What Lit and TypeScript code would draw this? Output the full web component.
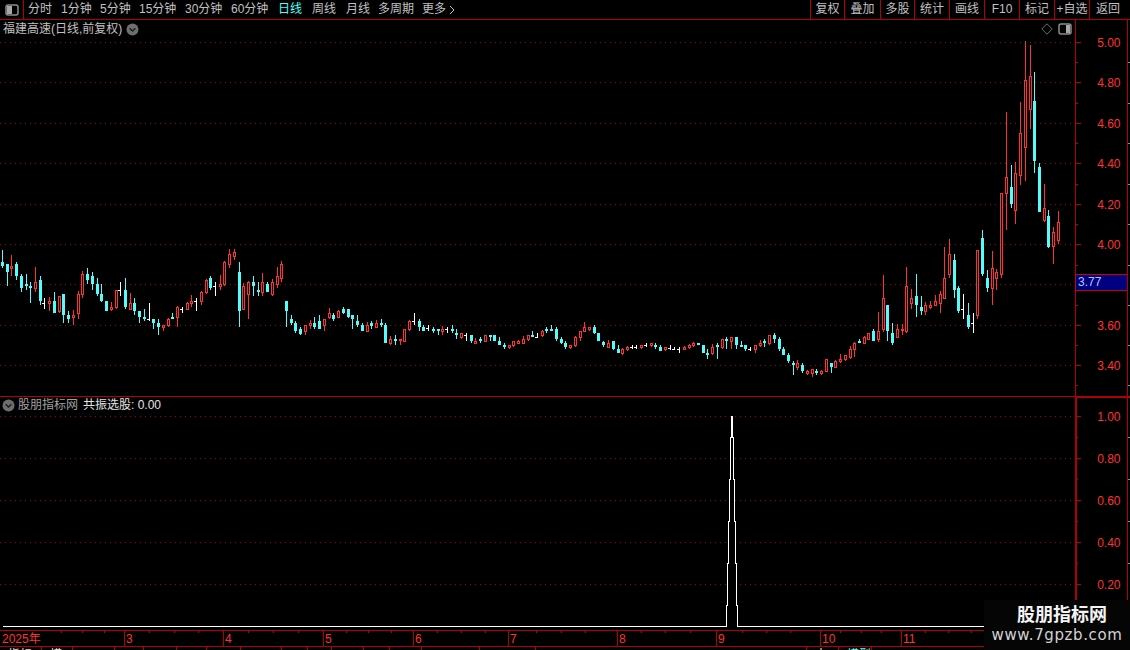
import { LitElement, css, html, svg } from "lit";
import { customElement } from "lit/decorators.js";

type Kind = "c" | "r" | "w";
type Row = [number, number, number, number, number, Kind];

const RED = "#ff3232";
const CYAN = "#54fcfc";
const FRAME = "#b00000";

// candles read off the chart, [x, wick top, body top, body bottom, wick bottom, kind],
// in 3x units from the origin of each stretch
const STRETCHES: { ox: number; oy: number; rows: Row[] }[] = [
  {
    ox: 0,
    oy: 240,
    rows: [
      [7,30,66,78,84,"c"],[22,72,72,96,138,"c"],[34,45,78,87,108,"r"],[49,66,72,108,120,"c"],[64,102,108,144,156,"c"],
      [79,102,132,138,150,"c"],[91,126,138,144,189,"c"],[106,81,126,147,156,"r"],[121,108,120,183,195,"c"],[133,174,189,189,207,"w"],
      [148,171,183,192,213,"r"],[163,156,183,219,219,"c"],[178,168,168,216,219,"r"],[190,162,162,225,249,"c"],[205,213,225,237,249,"c"],
      [220,210,225,234,255,"r"],[235,153,162,222,237,"r"],[247,93,102,165,174,"r"],[262,84,102,120,132,"c"],[277,96,108,132,150,"c"],
      [292,114,132,162,168,"c"],[304,132,162,183,186,"c"],[319,183,183,213,213,"c"],[334,186,201,210,213,"r"],[349,150,150,204,207,"r"],
      [361,126,150,150,168,"w"],[376,114,150,201,207,"c"],[391,159,189,210,210,"r"],[403,174,189,213,225,"c"],[418,213,213,231,249,"c"],
      [433,207,231,237,243,"c"],[448,189,238,238,243,"w"],[460,237,237,249,267,"c"],[475,237,249,261,285,"c"],[490,255,255,264,273,"r"],
      [505,234,237,258,261,"r"],[517,219,231,237,237,"c"],[532,198,201,234,261,"r"],[547,201,207,207,219,"w"],[562,186,189,210,210,"r"],
      [574,165,183,192,201,"r"],[589,174,183,183,213,"w"],[604,153,156,186,195,"r"],[619,117,120,159,162,"r"],[631,108,114,144,150,"c"],
      [646,126,138,138,168,"w"],[661,105,132,141,150,"r"],[673,63,66,135,138,"r"],[688,27,42,75,84,"r"],[703,27,36,51,60,"r"],
      [718,66,96,213,261,"c"],[730,129,138,210,210,"r"],[745,123,126,165,237,"r"],[760,108,126,138,168,"c"],[775,126,150,156,168,"c"],
      [787,99,126,159,168,"r"],[802,126,132,156,156,"c"],[817,117,126,165,168,"r"],[832,81,108,135,144,"r"],[844,63,72,117,126,"r"],
      [859,183,183,213,261,"c"],[874,225,237,249,255,"c"],[886,243,249,273,279,"c"],
    ],
  },
  {
    ox: 300,
    oy: 300,
    rows: [
      [1,82,87,102,105,"c"],[16,75,75,96,105,"r"],[31,60,69,78,87,"r"],[43,51,69,81,87,"c"],[58,45,63,87,87,"c"],
      [73,57,57,78,93,"r"],[88,24,39,54,57,"r"],[100,39,45,57,63,"c"],[115,30,33,54,54,"r"],[130,21,27,39,42,"c"],
      [145,27,27,51,54,"c"],[157,45,45,57,87,"c"],[172,45,63,75,81,"c"],[187,69,75,93,93,"c"],[202,66,75,96,96,"r"],
      [214,63,69,78,87,"c"],[229,60,69,84,84,"r"],[244,57,69,75,81,"c"],[256,69,75,129,129,"c"],[271,108,117,132,135,"r"],
      [286,105,117,123,135,"c"],[301,117,117,123,135,"r"],[313,87,87,126,126,"r"],[328,60,63,90,93,"r"],[343,39,63,63,75,"w"],
      [358,57,63,81,93,"c"],[370,75,81,93,93,"c"],[385,75,84,84,93,"w"],[400,81,87,93,99,"c"],[415,87,87,93,105,"c"],
      [427,78,87,96,105,"r"],[442,81,87,87,99,"w"],[457,75,87,93,99,"c"],[469,87,99,102,117,"c"],[484,99,99,114,117,"r"],
      [499,99,105,105,123,"w"],[514,105,105,123,129,"c"],[526,114,123,132,132,"r"],[541,111,117,123,129,"c"],[556,105,105,126,126,"r"],
      [571,105,105,111,123,"c"],[583,105,105,123,123,"c"],[598,111,123,135,135,"c"],[613,129,135,141,147,"c"],[628,135,135,144,147,"r"],
      [640,123,123,138,141,"r"],[655,120,123,132,132,"r"],[670,108,117,132,132,"r"],[685,105,105,120,123,"r"],[697,93,105,111,111,"c"],
      [712,99,111,111,114,"w"],[727,90,93,108,111,"r"],[739,81,87,93,99,"c"],[754,75,87,93,93,"c"],[769,81,87,117,123,"c"],
      [784,111,117,129,132,"c"],[796,123,129,141,147,"c"],[811,135,135,144,147,"r"],[826,108,111,138,141,"r"],[841,93,93,114,123,"r"],
      [853,66,81,96,96,"r"],[868,81,81,90,93,"r"],[883,75,81,99,102,"c"],[895,99,99,123,123,"c"],
    ],
  },
  {
    ox: 600,
    oy: 310,
    rows: [
      [10,93,96,105,111,"c"],[25,90,99,114,114,"r"],[40,93,93,117,120,"c"],[55,105,117,129,129,"c"],[67,114,117,132,135,"r"],
      [82,108,111,120,123,"r"],[97,105,111,111,117,"w"],[109,105,111,111,117,"w"],[124,105,105,114,117,"r"],[139,99,105,105,111,"w"],
      [154,99,99,108,111,"r"],[166,99,105,111,117,"c"],[181,105,111,123,123,"c"],[196,111,111,120,123,"r"],[211,105,114,114,120,"w"],
      [223,111,117,117,120,"w"],[238,111,117,117,129,"w"],[253,108,111,120,120,"r"],[268,102,105,114,117,"r"],[280,96,99,108,111,"r"],
      [295,99,99,105,105,"c"],[310,105,105,129,129,"c"],[322,117,129,135,147,"c"],[337,102,111,132,135,"r"],[352,99,105,111,147,"c"],
      [367,87,87,114,117,"r"],[379,81,87,93,117,"c"],[394,81,81,96,117,"r"],[409,81,81,105,117,"c"],[424,93,105,111,111,"c"],
      [436,105,105,117,123,"c"],[451,111,117,117,123,"w"],[466,105,105,120,129,"r"],[481,90,99,108,111,"r"],[493,87,93,99,111,"c"],
      [508,75,75,102,105,"r"],[523,69,75,87,99,"c"],[538,81,87,117,123,"c"],[550,111,117,135,135,"c"],[565,129,135,153,159,"c"],
      [580,153,159,165,195,"c"],[592,150,159,174,180,"r"],[607,159,165,183,189,"c"],[622,180,183,192,195,"r"],[637,177,177,192,201,"r"],
      [649,177,183,189,195,"c"],[664,180,183,192,195,"r"],[679,147,147,186,186,"r"],[694,159,159,171,189,"c"],[706,150,153,174,174,"r"],
      [721,132,147,156,159,"r"],[736,135,135,150,153,"r"],[751,108,117,144,147,"r"],[763,96,99,120,141,"r"],[778,87,93,99,99,"c"],
      [793,78,81,102,102,"r"],[805,69,69,90,90,"r"],[820,57,63,93,93,"c"],
    ],
  },
  {
    ox: 860,
    oy: 30,
    rows: [
      [55,846,903,930,936,"r"],[70,735,804,900,906,"r"],[82,825,825,903,933,"c"],[97,879,909,939,945,"c"],[112,882,897,924,924,"r"],
      [127,882,897,903,915,"r"],[139,711,768,906,909,"r"],[154,777,804,822,837,"r"],[169,732,798,825,861,"c"],[184,798,831,843,855,"c"],
      [196,816,825,846,855,"r"],[211,813,825,834,837,"r"],[226,795,813,828,828,"r"],[241,783,792,822,849,"r"],[253,651,744,807,807,"r"],
      [268,627,672,735,744,"r"],[283,672,690,780,804,"c"],[295,768,774,843,849,"c"],[310,792,837,837,867,"w"],[325,819,855,891,897,"c"],
      [340,849,879,879,909,"w"],[352,660,660,858,867,"r"],[367,600,624,732,738,"c"],[382,720,744,774,786,"c"],[397,663,714,777,825,"r"],
      [409,717,726,747,780,"r"],[424,489,489,735,744,"r"],[439,246,441,492,600,"r"],[454,405,471,522,534,"c"],[466,396,429,543,582,"r"],
      [481,216,309,438,465,"r"],[496,33,150,354,453,"r"],[511,45,138,240,297,"r"],[523,126,213,393,429,"c"],[538,399,411,546,546,"c"],
      [553,462,534,573,576,"r"],[565,540,558,651,654,"c"],[580,591,606,651,702,"r"],[595,543,576,633,642,"r"],
    ],
  },
];

const PRICE_AXIS = [
  { y: 42, label: "5.00" },
  { y: 82, label: "4.80" },
  { y: 123, label: "4.60" },
  { y: 163, label: "4.40" },
  { y: 204, label: "4.20" },
  { y: 244, label: "4.00" },
  { y: 325, label: "3.60" },
  { y: 365, label: "3.40" },
];
const PRICE_GRID = [42, 82, 123, 163, 204, 244, 284, 325, 365];
const PRICE_MINOR = [62, 103, 143, 184, 224, 265, 305, 345, 385];

const SIGNAL_AXIS = [
  { y: 416, label: "1.00" },
  { y: 458, label: "0.80" },
  { y: 500, label: "0.60" },
  { y: 542, label: "0.40" },
  { y: 584, label: "0.20" },
];
const SIGNAL_MINOR = [437, 479, 521, 563, 605];

// stepped outline of the single signal spike
const SPIKE = [
  [2, 626], [726, 626], [726, 605], [727, 605], [727, 563], [728, 563], [728, 521], [729, 521],
  [729, 479], [730, 479], [730, 437], [731, 437], [731, 416], [732, 416], [732, 437], [733, 437],
  [733, 479], [734, 479], [734, 521], [735, 521], [735, 563], [736, 563], [736, 605], [737, 605],
  [737, 626], [984, 626],
];

const MONTHS = [
  { x: 0, label: "2025年" },
  { x: 124, label: "3" },
  { x: 223, label: "4" },
  { x: 323, label: "5" },
  { x: 413, label: "6" },
  { x: 508, label: "7" },
  { x: 617, label: "8" },
  { x: 716, label: "9" },
  { x: 820, label: "10" },
  { x: 901, label: "11" },
];
const WEEK_TICKS = [
  61, 82, 104, 149, 174, 198, 248, 273, 298, 346, 368, 391, 437, 461, 485, 536, 561, 585,
  641, 665, 690, 742, 766, 790, 840, 861, 881, 925, 948, 971,
];

const TABS = [
  { label: "分时", w: 33 },
  { label: "1分钟", w: 39 },
  { label: "5分钟", w: 39 },
  { label: "15分钟", w: 46 },
  { label: "30分钟", w: 46 },
  { label: "60分钟", w: 47 },
  { label: "日线", w: 34, on: true },
  { label: "周线", w: 34 },
  { label: "月线", w: 32 },
  { label: "多周期", w: 44 },
];

const TOOLS = [
  { label: "复权", w: 34 },
  { label: "叠加", w: 36 },
  { label: "多股", w: 34 },
  { label: "统计", w: 35 },
  { label: "画线", w: 35 },
  { label: "F10", w: 35 },
  { label: "标记", w: 35 },
  { label: "+自选", w: 35 },
  { label: "返回", w: 41 },
];

// bottom strip, mostly cut off by the window edge
const STRIP = [
  { label: "指标", w: 42 }, { label: "模板", w: 31 }, { label: "", w: 42 }, { label: "", w: 29 },
  { label: "", w: 33 }, { label: "", w: 30 }, { label: "", w: 34 }, { label: "", w: 41 },
  { label: "", w: 26 }, { label: "", w: 24 }, { label: "", w: 32 }, { label: "", w: 26 },
  { label: "", w: 32 }, { label: "", w: 58 }, { label: "", w: 56 }, { label: "", w: 271 },
  { label: "大盘", w: 32 }, { label: "模型", w: 33, on: true },
];

const panelIcon = (fillLeft: boolean) => html`
  <svg class="icon" width="14" height="12" viewBox="0 0 14 12">
    <rect x="1" y="1" width="12" height="10" rx="2" fill="#000" stroke="#8c8c8c" stroke-width="1.5"></rect>
    ${fillLeft
      ? svg`<rect x="2" y="2" width="5" height="8" fill="#a8a8a8"></rect>`
      : svg`<rect x="8" y="2" width="4" height="8" fill="#a8a8a8"></rect>`}
  </svg>
`;

const chevronBadge = () => html`
  <svg class="badge" width="13" height="13" viewBox="0 0 13 13">
    <circle cx="6.5" cy="6.5" r="6" fill="#6e6e6e"></circle>
    <path d="M3.6 5.2 L6.5 8 L9.4 5.2" fill="none" stroke="#1c1c1c" stroke-width="1.5"></path>
  </svg>
`;

const candleMarks = () =>
  STRETCHES.flatMap(({ ox, oy, rows }) =>
    rows.map(([zx, top, bodyTop, bodyBot, bottom, kind]) => {
      const x = Math.floor(ox + zx / 3);
      const y0 = Math.round(oy + top / 3);
      const y1 = Math.round(oy + bottom / 3);
      const b0 = Math.round(oy + bodyTop / 3);
      const b1 = Math.round(oy + bodyBot / 3);
      const color = kind === "c" ? CYAN : kind === "r" ? RED : "#fff";
      const wick = svg`<rect x=${x} y=${y0} width="1" height=${Math.max(y1 - y0, 1)} fill=${color}></rect>`;
      if (kind === "w") {
        return svg`${wick}<rect x=${x - 2} y=${b0} width="2" height="1" fill="#fff"></rect>`;
      }
      if (kind === "c") {
        return svg`${wick}<rect x=${x - 1} y=${b0} width="3" height=${Math.max(b1 - b0, 2)} fill=${CYAN}></rect>`;
      }
      return svg`${wick}<rect x=${x - 0.5} y=${b0 + 0.5} width="2" height=${Math.max(b1 - b0 - 1, 1)} fill="#000" stroke=${RED}></rect>`;
    })
  );

const gridLines = (ys: number[]) =>
  ys.map((y) => svg`<line class="grid" x1="0" x2="1075" y1=${y + 0.5} y2=${y + 0.5}></line>`);

const axisMarks = (
  labels: { y: number; label: string }[],
  minor: number[],
  lineWidth: number,
  top: number,
  bottom: number
) => svg`
  <rect x="1075" y=${top} width=${lineWidth} height=${bottom - top} fill=${FRAME}></rect>
  <rect x="1127" y=${top} width="1" height=${bottom - top} fill=${FRAME}></rect>
  ${labels.map(
    (l) => svg`
      <rect x="1075" y=${l.y} width="6" height="1" fill=${FRAME}></rect>
      <text class="axis" x="1120.5" y=${l.y + 5} text-anchor="end">${l.label}</text>
    `
  )}
  ${minor.map((y) => svg`<rect x="1075" y=${y} width="3" height="1" fill=${FRAME}></rect>`)}
  ${minor.map((y) => svg`<rect x="1128" y=${y} width="2" height="1" fill="#8c8c8c"></rect>`)}
`;

@customElement("app-root")
export class AppRoot extends LitElement {
  static styles = css`
    :host {
      position: relative;
      display: flex;
      flex-direction: column;
      width: 1130px;
      height: 650px;
      overflow: hidden;
      background: #000;
      color: #c0c0c0;
      font: 12px "Liberation Sans", "Noto Sans CJK SC", sans-serif;
    }
    svg {
      display: block;
      flex: none;
    }
    .chart {
      shape-rendering: crispEdges;
    }
    .grid {
      stroke: #a00000;
      stroke-dasharray: 1 4;
    }
    .axis {
      fill: #ff3232;
      font-size: 12px;
      shape-rendering: auto;
    }
    .toolbar {
      display: flex;
      align-items: stretch;
      height: 19px;
      flex: none;
      border-bottom: 1px solid #b00000;
      line-height: 19px;
    }
    .toggle {
      display: flex;
      align-items: center;
      justify-content: center;
      width: 23px;
      border-right: 1px solid #b00000;
    }
    .tabs {
      display: flex;
      padding-left: 4px;
    }
    .tab {
      white-space: nowrap;
    }
    .tab.on {
      color: #54fcfc;
    }
    .more {
      display: flex;
      align-items: center;
      gap: 3px;
      width: 36px;
      white-space: nowrap;
    }
    .tools {
      display: flex;
      margin-left: auto;
    }
    .tool {
      box-sizing: border-box;
      border-left: 1px solid #b00000;
      text-align: center;
      white-space: nowrap;
    }
    .tool:last-child {
      padding-right: 4px;
    }
    .panel {
      position: relative;
      flex: none;
    }
    .price {
      height: 376px;
      border-bottom: 1px solid #b00000;
    }
    .signal {
      height: 233px;
    }
    .legend {
      position: absolute;
      top: 2px;
      left: 3px;
      display: flex;
      align-items: center;
      gap: 4px;
      line-height: 15px;
    }
    .signal .legend {
      top: 1px;
      left: 2px;
      gap: 3px;
    }
    .dim {
      color: #a0a0a0;
    }
    .value {
      margin-left: 2px;
      color: #e4e4e4;
    }
    .corner {
      position: absolute;
      top: 3px;
      left: 1041px;
      display: flex;
      align-items: center;
      gap: 5px;
    }
    .last-price {
      position: absolute;
      top: 254px;
      left: 1075px;
      box-sizing: border-box;
      width: 52px;
      height: 17px;
      padding-left: 2px;
      background: #000080;
      border-top: 1px solid #c80000;
      border-bottom: 1px solid #c80000;
      border-left: 1px solid #c80000;
      color: #aac8ff;
      line-height: 15px;
    }
    .dates {
      height: 16px;
      flex: none;
    }
    .date {
      fill: #ff3232;
      font-size: 12px;
      shape-rendering: auto;
    }
    .strip {
      display: flex;
      height: 4px;
      flex: none;
      overflow: hidden;
      border-top: 1px solid #b00000;
      box-sizing: border-box;
    }
    .cell {
      box-sizing: border-box;
      flex: none;
      height: 16px;
      padding-left: 8px;
      border-right: 1px solid #b00000;
      color: #e0e0e0;
      line-height: 16px;
    }
    .cell.on {
      color: #54fcfc;
    }
    .mark {
      position: absolute;
      right: 0;
      bottom: 0;
      display: flex;
      flex-direction: column;
      align-items: center;
      box-sizing: border-box;
      width: 146px;
      height: 50px;
      padding-top: 5px;
      background: #050505;
    }
    .mark-name {
      margin-left: 10px;
      color: #f4f4f4;
      font-size: 18px;
      font-weight: 700;
      line-height: 21px;
    }
    .mark-url {
      color: #d2d2d2;
      font-family: "DejaVu Sans", sans-serif;
      font-size: 15px;
      letter-spacing: 0.6px;
      line-height: 18px;
    }
  `;

  render() {
    return html`
      <div class="toolbar">
        <div class="toggle">${panelIcon(true)}</div>
        <div class="tabs">
          ${TABS.map(
            (t) => html`<div class="tab ${t.on ? "on" : ""}" style="width:${t.w}px">${t.label}</div>`
          )}
          <div class="more">
            更多
            <svg width="6" height="10" viewBox="0 0 6 10">
              <path d="M1 1 L5 5 L1 9" fill="none" stroke="#c0c0c0"></path>
            </svg>
          </div>
        </div>
        <div class="tools">
          ${TOOLS.map((t) => html`<div class="tool" style="width:${t.w}px">${t.label}</div>`)}
        </div>
      </div>

      <div class="panel price">
        <svg class="chart" width="1130" height="376" viewBox="0 20 1130 376">
          ${gridLines(PRICE_GRID)} ${candleMarks()}
          ${axisMarks(PRICE_AXIS, PRICE_MINOR, 1, 20, 396)}
        </svg>
        <div class="legend">福建高速(日线,前复权) ${chevronBadge()}</div>
        <div class="corner">
          <svg width="12" height="12" viewBox="0 0 12 12">
            <path d="M6 .8 L11.2 6 L6 11.2 L.8 6 Z" fill="none" stroke="#6e6e6e"></path>
          </svg>
          ${panelIcon(false)}
        </div>
        <div class="last-price">3.77</div>
      </div>

      <div class="panel signal">
        <svg class="chart" width="1130" height="233" viewBox="0 397 1130 233">
          ${gridLines(SIGNAL_AXIS.map((l) => l.y))}
          <polyline
            points=${SPIKE.map(([x, y]) => `${x + 0.5},${y + 0.5}`).join(" ")}
            fill="#000"
            stroke="#fff"
          ></polyline>
          ${axisMarks(SIGNAL_AXIS, SIGNAL_MINOR, 2, 397, 630)}
          <rect x="1075" y="397" width="55" height="1" fill=${FRAME}></rect>
        </svg>
        <div class="legend">
          ${chevronBadge()}
          <span class="dim">股朋指标网</span>
          <span class="value">共振选股: 0.00</span>
        </div>
      </div>

      <svg class="chart dates" width="1130" height="16" viewBox="0 630 1130 16">
        <rect x="0" y="630" width="1130" height="1" fill=${FRAME}></rect>
        ${WEEK_TICKS.map((x) => svg`<rect x=${x} y="631" width="1" height="2" fill=${FRAME}></rect>`)}
        ${MONTHS.map(
          (m) => svg`
            ${m.x ? svg`<rect x=${m.x} y="630" width="1" height="16" fill=${FRAME}></rect>` : ""}
            <text class="date" x=${m.x + 2} y="643">${m.label}</text>
          `
        )}
      </svg>

      <div class="strip">
        ${STRIP.map(
          (c) => html`<div class="cell ${c.on ? "on" : ""}" style="width:${c.w}px">${c.label}</div>`
        )}
      </div>

      <div class="mark">
        <div class="mark-name">股朋指标网</div>
        <div class="mark-url">www.7gpzb.com</div>
      </div>
    `;
  }
}
